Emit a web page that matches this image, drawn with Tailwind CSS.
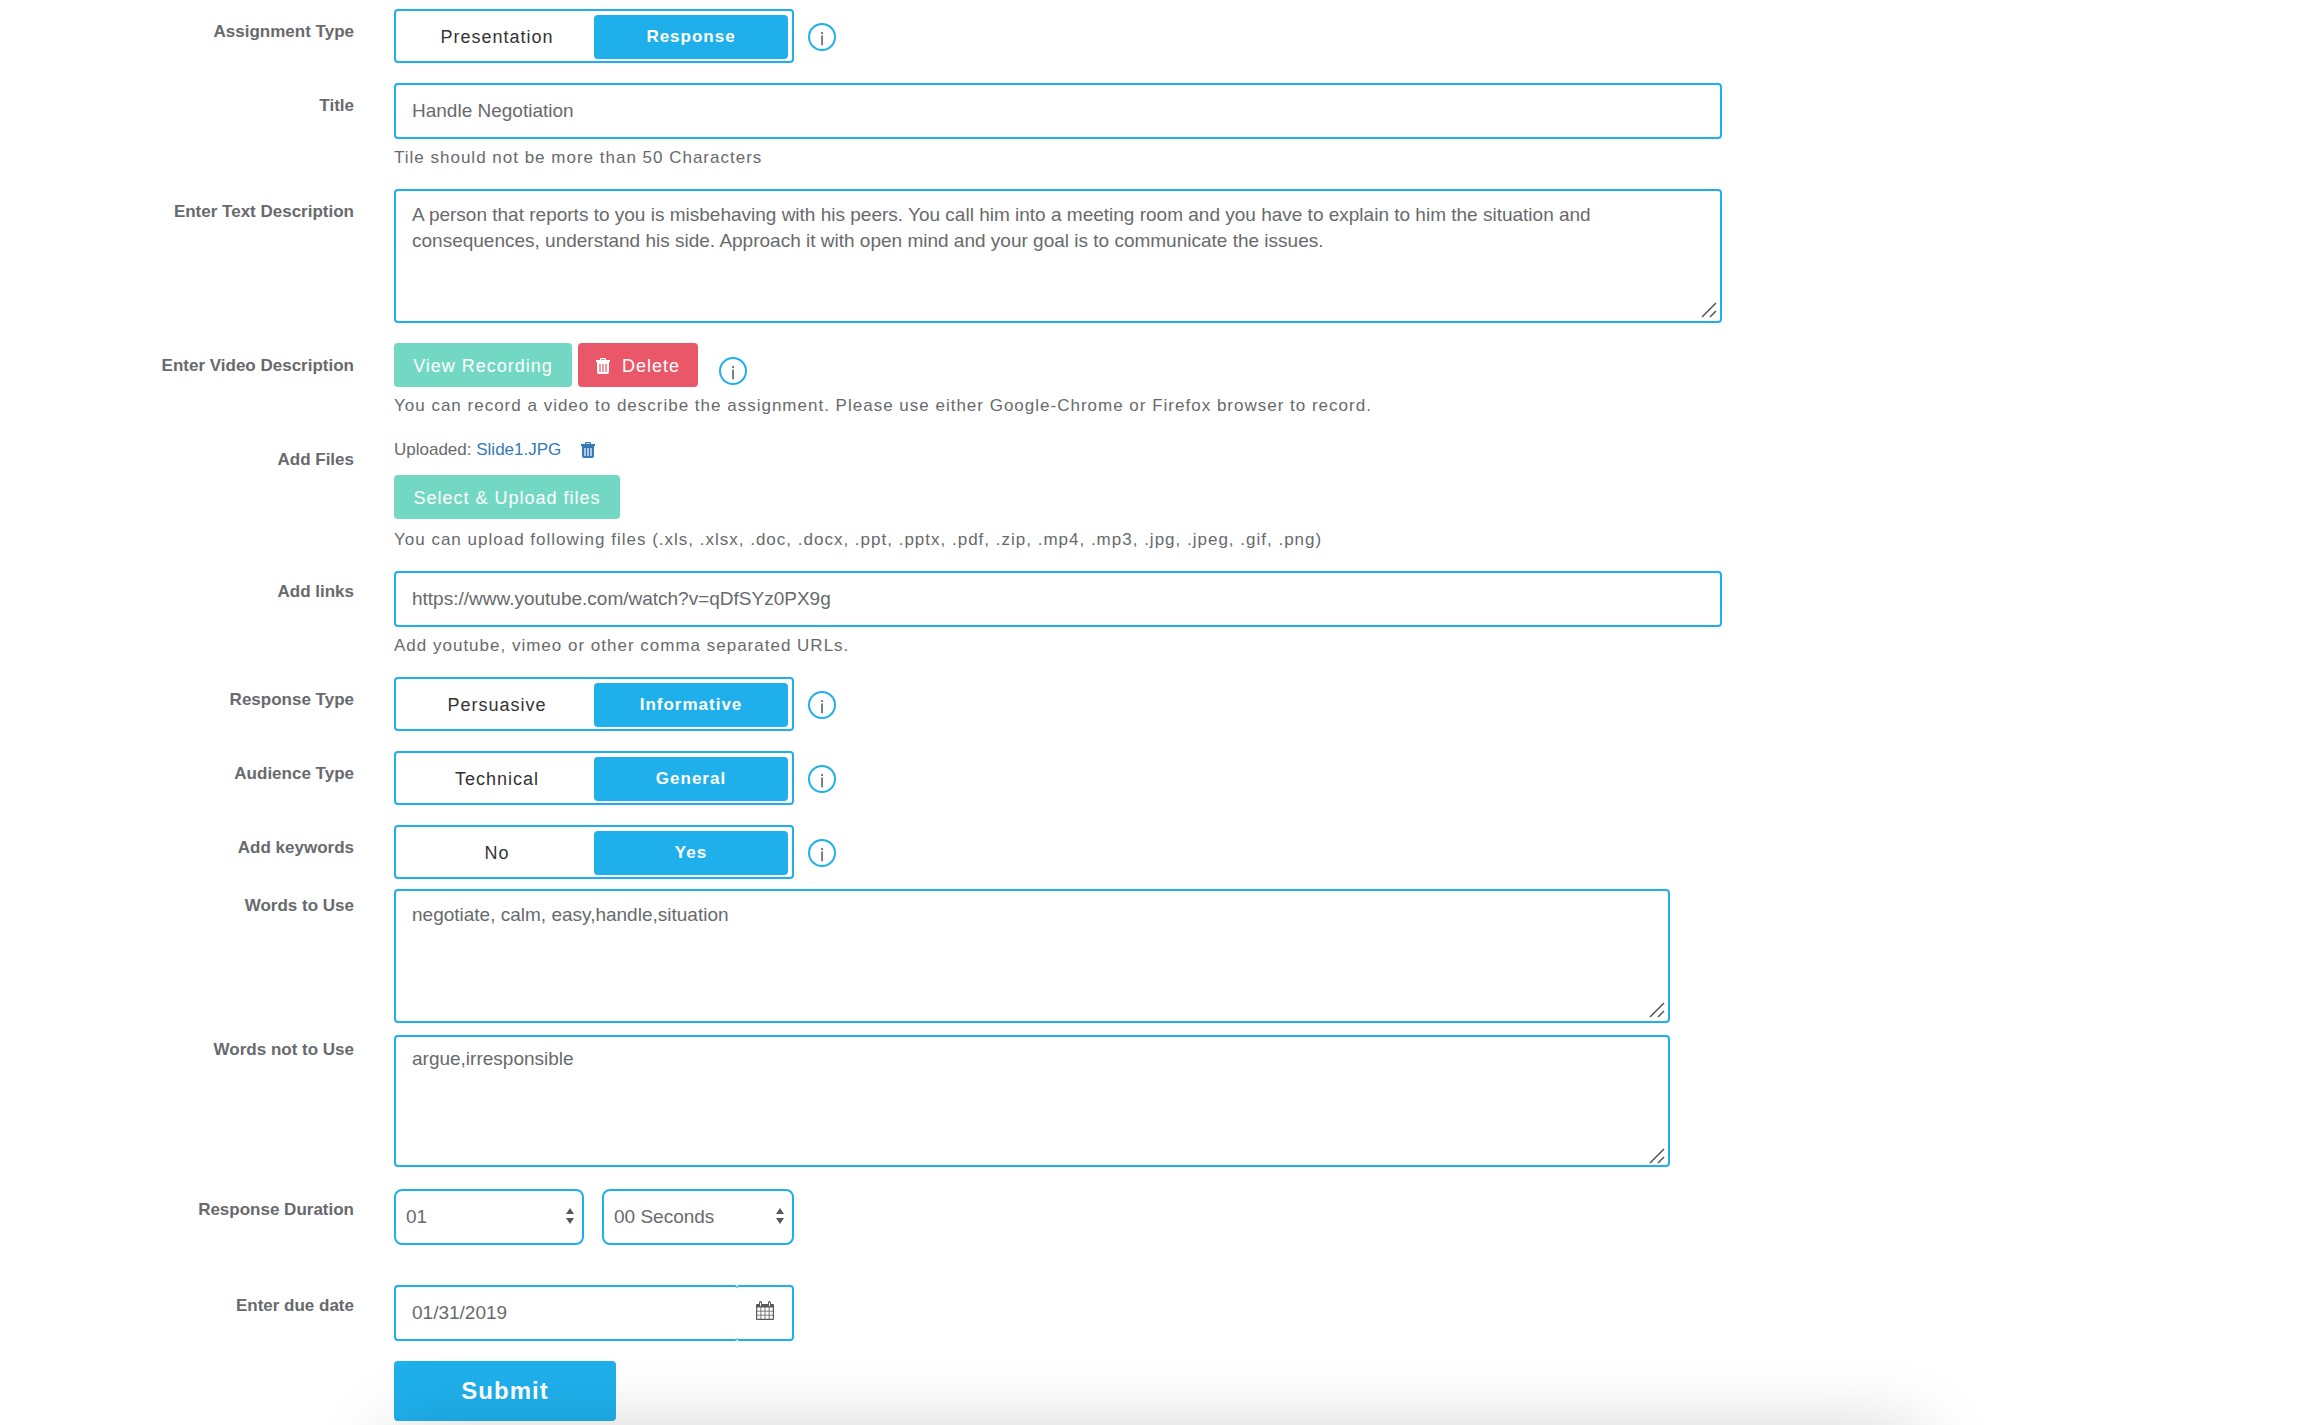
<!DOCTYPE html>
<html lang="en">
<head>
<meta charset="utf-8">
<title>Assignment</title>
<script src="https://cdn.jsdelivr.net/npm/@tailwindcss/browser@4"></script>
</head>
<body class="relative min-h-screen overflow-x-hidden bg-white font-['Helvetica_Neue','Liberation_Sans',Arial,sans-serif] text-[17px] leading-6 text-[#676a6c]">
<svg class="hidden" aria-hidden="true">
  <symbol id="trash" viewBox="0 0 14 16"><path fill="currentColor" fill-rule="evenodd" d="M5 0h4a1 1 0 0 1 1 1v1h4v2H0V2h4V1a1 1 0 0 1 1-1Zm.2 1.200V2h3.600v-.8ZM1 4h12V14a2 2 0 0 1-2 2H3a2 2 0 0 1-2-2ZM3.400 6v8h1.200V6Zm3 0v8h1.200V6Zm3 0v8h1.200V6Z"/></symbol>
  <symbol id="grip" viewBox="0 0 16 16"><path fill="none" stroke="#555" stroke-width="1.500" d="M1 15 15 1M9 15l6-6"/></symbol>
  <symbol id="updown" viewBox="0 0 8 16"><path fill="#58595b" d="M4 0l4 6H0ZM0 10h8l-4 6Z"/></symbol>
  <symbol id="info" viewBox="0 0 28 28"><circle cx="14" cy="14" r="13" fill="none" stroke="#1fb0ec" stroke-width="2"/><path fill="#676a6c" d="M13.200 9h1.700v2h-1.700ZM13.200 12.500h1.700v9.700h-1.700Z"/></symbol>
</svg>
<form class="pt-[9px]">
  <div class="grid grid-cols-[354fr_1328fr_550fr] gap-x-10">
    <span id="l-kind" class="pt-[11px] text-right font-bold">Assignment Type</span>
    <div class="mb-5 flex items-center gap-3.5">
      <div role="radiogroup" aria-labelledby="l-kind" class="grid h-[54px] w-[400px] grid-cols-2 rounded border-2 border-[#1fb0ec] p-1 pb-0.5 text-center leading-[44px]">
        <label class="text-lg/[44px] tracking-[1px] text-[#333]"><input class="sr-only" type="radio" name="kind">Presentation</label>
        <label class="rounded bg-[#1fb0ec] font-bold tracking-[1px] text-white"><input class="sr-only" type="radio" name="kind" checked>Response</label>
      </div>
      <button type="button" aria-label="About assignment type" class="mt-0.5"><svg class="size-7" aria-hidden="true"><use href="#info"/></svg></button>
    </div>
  </div>

  <div class="grid grid-cols-[354fr_1328fr_550fr] gap-x-10">
    <label for="title" class="pt-[11px] text-right font-bold">Title</label>
    <div class="mb-[19px]">
      <input id="title" type="text" value="Handle Negotiation" class="block h-14 w-full rounded border-2 border-[#1fb0ec] px-4 text-[19px]">
      <p class="mt-[7px] tracking-[1px]">Tile should not be more than 50 Characters</p>
    </div>
  </div>

  <div class="grid grid-cols-[354fr_1328fr_550fr] gap-x-10">
    <label for="desc" class="pt-[11px] text-right font-bold">Enter Text Description</label>
    <div class="relative mb-5">
      <textarea id="desc" class="block h-[134px] w-full resize-none rounded border-2 border-[#1fb0ec] px-4 py-[11px] text-[19px]/[26px]">A person that reports to you is misbehaving with his peers. You call him into a meeting room and you have to explain to him the situation and consequences, understand his side. Approach it with open mind and your goal is to communicate the issues.</textarea>
      <svg class="absolute right-[5px] bottom-[5px] size-4" aria-hidden="true"><use href="#grip"/></svg>
    </div>
  </div>

  <div class="grid grid-cols-[354fr_1328fr_550fr] gap-x-10">
    <span class="pt-[11px] text-right font-bold">Enter Video Description</span>
    <div class="mb-[19px]">
      <div class="flex items-end">
        <button type="button" class="h-11 w-[178px] rounded bg-[#73d8c3] pt-0.5 text-lg tracking-[1px] text-white">View Recording</button>
        <button type="button" class="ml-1.5 flex h-11 w-[120px] items-center justify-center gap-3 rounded bg-[#ea5768] pt-0.5 text-lg tracking-[1px] text-white"><svg class="h-4 w-3.5" aria-hidden="true"><use href="#trash"/></svg>Delete</button>
        <button type="button" aria-label="About video description" class="mb-0.5 ml-[21px]"><svg class="block size-7" aria-hidden="true"><use href="#info"/></svg></button>
      </div>
      <p class="mt-[7px] tracking-[1px]">You can record a video to describe the assignment. Please use either Google-Chrome or Firefox browser to record.</p>
    </div>
  </div>

  <div class="grid grid-cols-[354fr_1328fr_550fr] gap-x-10">
    <span class="pt-[11px] text-right font-bold">Add Files</span>
    <div class="mb-[19px]">
      <div class="flex items-center pt-px">Uploaded:&nbsp;<a href="#" class="text-[#337ab7]">Slide1.JPG</a><button type="button" aria-label="Remove Slide1.JPG" class="ml-5 text-[#337ab7]"><svg class="block h-4 w-3.5" aria-hidden="true"><use href="#trash"/></svg></button></div>
      <button type="button" class="mt-[13px] block h-11 w-[226px] rounded bg-[#73d8c3] pt-0.5 text-lg tracking-[1px] text-white">Select &amp; Upload files</button>
      <p class="mt-[9px] tracking-[1px]">You can upload following files (.xls, .xlsx, .doc, .docx, .ppt, .pptx, .pdf, .zip, .mp4, .mp3, .jpg, .jpeg, .gif, .png)</p>
    </div>
  </div>

  <div class="grid grid-cols-[354fr_1328fr_550fr] gap-x-10">
    <label for="links" class="pt-[9px] text-right font-bold">Add links</label>
    <div class="mb-[19px]">
      <input id="links" type="text" value="https://www.youtube.com/watch?v=qDfSYz0PX9g" class="block h-14 w-full rounded border-2 border-[#1fb0ec] px-4 text-[19px]">
      <p class="mt-[7px] tracking-[1px]">Add youtube, vimeo or other comma separated URLs.</p>
    </div>
  </div>

  <div class="grid grid-cols-[354fr_1328fr_550fr] gap-x-10">
    <span id="l-resp" class="pt-[11px] text-right font-bold">Response Type</span>
    <div class="mb-5 flex items-center gap-3.5">
      <div role="radiogroup" aria-labelledby="l-resp" class="grid h-[54px] w-[400px] grid-cols-2 rounded border-2 border-[#1fb0ec] p-1 pb-0.5 text-center leading-[44px]">
        <label class="text-lg/[44px] tracking-[1px] text-[#333]"><input class="sr-only" type="radio" name="resp">Persuasive</label>
        <label class="rounded bg-[#1fb0ec] font-bold tracking-[1px] text-white"><input class="sr-only" type="radio" name="resp" checked>Informative</label>
      </div>
      <button type="button" aria-label="About response type" class="mt-0.5"><svg class="size-7" aria-hidden="true"><use href="#info"/></svg></button>
    </div>
  </div>

  <div class="grid grid-cols-[354fr_1328fr_550fr] gap-x-10">
    <span id="l-aud" class="pt-[11px] text-right font-bold">Audience Type</span>
    <div class="mb-5 flex items-center gap-3.5">
      <div role="radiogroup" aria-labelledby="l-aud" class="grid h-[54px] w-[400px] grid-cols-2 rounded border-2 border-[#1fb0ec] p-1 pb-0.5 text-center leading-[44px]">
        <label class="text-lg/[44px] tracking-[1px] text-[#333]"><input class="sr-only" type="radio" name="aud">Technical</label>
        <label class="rounded bg-[#1fb0ec] font-bold tracking-[1px] text-white"><input class="sr-only" type="radio" name="aud" checked>General</label>
      </div>
      <button type="button" aria-label="About audience type" class="mt-0.5"><svg class="size-7" aria-hidden="true"><use href="#info"/></svg></button>
    </div>
  </div>

  <div class="grid grid-cols-[354fr_1328fr_550fr] gap-x-10">
    <span id="l-key" class="pt-[11px] text-right font-bold">Add keywords</span>
    <div class="mb-2.5 flex items-center gap-3.5">
      <div role="radiogroup" aria-labelledby="l-key" class="grid h-[54px] w-[400px] grid-cols-2 rounded border-2 border-[#1fb0ec] p-1 pb-0.5 text-center leading-[44px]">
        <label class="text-lg/[44px] tracking-[1px] text-[#333]"><input class="sr-only" type="radio" name="key">No</label>
        <label class="rounded bg-[#1fb0ec] font-bold tracking-[1px] text-white"><input class="sr-only" type="radio" name="key" checked>Yes</label>
      </div>
      <button type="button" aria-label="About keywords" class="mt-0.5"><svg class="size-7" aria-hidden="true"><use href="#info"/></svg></button>
    </div>
  </div>

  <div class="grid grid-cols-[354fr_1276fr_602fr] gap-x-10">
    <label for="use" class="pt-[5px] text-right font-bold">Words to Use</label>
    <div class="relative mb-3">
      <textarea id="use" class="block h-[134px] w-full resize-none rounded border-2 border-[#1fb0ec] px-4 py-[11px] text-[19px]/[26px]">negotiate, calm, easy,handle,situation</textarea>
      <svg class="absolute right-[5px] bottom-[5px] size-4" aria-hidden="true"><use href="#grip"/></svg>
    </div>
  </div>

  <div class="grid grid-cols-[354fr_1276fr_602fr] gap-x-10">
    <label for="avoid" class="pt-[3px] text-right font-bold">Words not to Use</label>
    <div class="relative mb-[22px]">
      <textarea id="avoid" class="block h-[132px] w-full resize-none rounded border-2 border-[#1fb0ec] px-4 py-[9px] text-[19px]/[26px]">argue,irresponsible</textarea>
      <svg class="absolute right-[5px] bottom-[3px] size-4" aria-hidden="true"><use href="#grip"/></svg>
    </div>
  </div>

  <div class="grid grid-cols-[354fr_1328fr_550fr] gap-x-10">
    <label for="min" class="pt-[9px] text-right font-bold">Response Duration</label>
    <div class="mb-10 flex gap-[18px]">
      <div class="relative w-[190px]">
        <select id="min" class="h-14 w-full appearance-none rounded-lg border-2 border-[#1fb0ec] bg-transparent px-2.5 text-[19px]"><option>01</option></select>
        <svg class="pointer-events-none absolute top-[19px] right-2.5 h-4 w-2" aria-hidden="true"><use href="#updown"/></svg>
      </div>
      <div class="relative w-[192px]">
        <select aria-label="Seconds" class="h-14 w-full appearance-none rounded-lg border-2 border-[#1fb0ec] bg-transparent px-2.5 text-[19px]"><option>00 Seconds</option></select>
        <svg class="pointer-events-none absolute top-[19px] right-2.5 h-4 w-2" aria-hidden="true"><use href="#updown"/></svg>
      </div>
    </div>
  </div>

  <div class="grid grid-cols-[354fr_1328fr_550fr] gap-x-10">
    <label for="due" class="pt-[9px] text-right font-bold">Enter due date</label>
    <div class="mb-5 flex w-[400px]">
      <input id="due" type="text" value="01/31/2019" class="h-14 w-[344px] rounded border-2 border-r-0 border-[#1fb0ec] px-4 text-[19px]">
      <button type="button" aria-label="Choose date" class="flex h-14 flex-1 items-center justify-center rounded-r border-2 border-l-0 border-[#1fb0ec] pb-1.5">
        <svg class="h-[19px] w-[18px]" viewBox="0 0 18 19" aria-hidden="true"><path fill="#58595b" fill-rule="evenodd" d="M1 3h2V1.500a1.500 1.500 0 0 1 3 0V3h6V1.500a1.500 1.500 0 0 1 3 0V3h2a1 1 0 0 1 1 1v14a1 1 0 0 1-1 1H1a1 1 0 0 1-1-1V4a1 1 0 0 1 1-1ZM4 1.500V5h1V1.500ZM13 1.500V5h1V1.500ZM1.200 6.500v3.300h3.300V6.500Zm4.100 0v3.300h3.300V6.500Zm4.100 0v3.300h3.300V6.500Zm4.100 0v3.300h3.300V6.500ZM1.200 10.600v3.200h3.300v-3.200Zm4.100 0v3.200h3.300v-3.200Zm4.100 0v3.200h3.300v-3.200Zm4.100 0v3.200h3.300v-3.200ZM1.200 14.600v3.200h3.300v-3.200Zm4.100 0v3.200h3.300v-3.200Zm4.100 0v3.200h3.300v-3.200Zm4.100 0v3.200h3.300v-3.200Z"/></svg>
      </button>
    </div>
  </div>

  <div class="grid grid-cols-[354fr_1328fr_550fr] gap-x-10">
    <div class="col-start-2"><button type="submit" class="block h-[60px] w-[222px] rounded bg-[#1fb0ec] text-2xl font-bold tracking-[1px] text-white">Submit</button></div>
  </div>
</form>
<!-- Soft shadow rising from the bottom edge -->
<div class="pointer-events-none absolute inset-x-0 bottom-0 h-32 overflow-hidden" aria-hidden="true">
  <div class="absolute inset-x-[17%] top-full mt-2.5 h-40 shadow-[0_0_80px_rgba(0,0,0,0.2)]"></div>
</div>
</body>
</html>
